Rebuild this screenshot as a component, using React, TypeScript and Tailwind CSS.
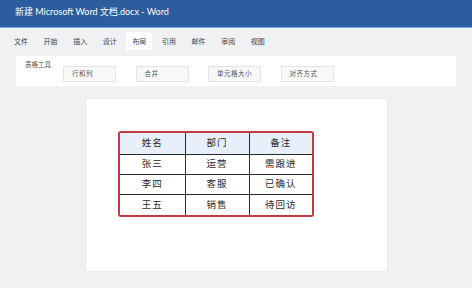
import React from 'react';

const tabs = ['文件', '开始', '插入', '设计', '布局', '引用', '邮件', '审阅', '视图'];
const tools = ['行和列', '合并', '单元格大小', '对齐方式'];
const rows = [
  ['张三', '运营', '需跟进'],
  ['李四', '客服', '已确认'],
  ['王五', '销售', '待回访'],
];

const font = { fontFamily: '"Noto Sans", "Noto Sans CJK SC", sans-serif' };

export default function App() {
  return (
    <div className="w-[472px] h-[288px] overflow-hidden bg-[#f0f1f3]" style={font}>
      {/* title bar */}
      <div className="h-[28px] bg-[#2c5d9e] border-b border-[#7fa3d6] flex items-center pl-[15px] pb-[4px]">
        <span className="text-white text-[9px] leading-none font-['Lato','Noto_Sans_CJK_SC',sans-serif]">
          新建 Microsoft Word 文档.docx - Word
        </span>
      </div>

      {/* tabs */}
      <div className="h-[28px] flex items-center pl-[8px] gap-[3.6px] pb-[2px]">
        {tabs.map((t) => (
          <div
            key={t}
            className={`w-[26px] h-[18px] flex items-center justify-center text-[7px] leading-none text-[#444] ${
              t === '布局' ? 'bg-white' : ''
            }`}
          >
            {t}
          </div>
        ))}
      </div>

      {/* ribbon */}
      <div className="mx-[16px] w-[440px] h-[30px] bg-white flex items-start">
        <div className="pl-[9px] pt-[6px] text-[6.5px] leading-none text-[#555] w-[47px]">表格工具</div>
        <div className="flex gap-[19.5px] pt-[10px]">
          {tools.map((t) => (
            <div
              key={t}
              className="w-[53px] h-[16px] border border-[#e2e4e8] bg-[#f8f8f9] flex items-center pl-[8px] text-[6.5px] leading-none text-[#555] tracking-[0.5px]"
            >
              {t}
            </div>
          ))}
        </div>
      </div>

      {/* document page */}
      <div className="ml-[85px] mt-[12px] w-[303px] h-[174px] bg-white border border-[#e9ebee] pl-[32px] pt-[32px]">
        <div className="w-[196px] border-2 border-[#bf3b3f] rounded-[3px] overflow-hidden">
          <table className="w-full table-fixed border-collapse text-[9.5px] text-[#2a2a2a] tracking-[1px]">
            <colgroup>
              <col className="w-[65px]" />
              <col className="w-[64px]" />
              <col className="w-[63px]" />
            </colgroup>
            <thead>
              <tr className="h-[21px] bg-[#e7effa]">
                {['姓名', '部门', '备注'].map((h, i) => (
                  <th
                    key={h}
                    className={`font-normal text-center border-b border-[#2a2a2a] ${i < 2 ? 'border-r' : ''}`}
                  >
                    {h}
                  </th>
                ))}
              </tr>
            </thead>
            <tbody>
              {rows.map((r, ri) => (
                <tr key={ri} className={ri === rows.length - 1 ? 'h-[21px]' : 'h-[20px]'}>
                  {r.map((c, ci) => (
                    <td
                      key={ci}
                      className={`text-center border-[#2a2a2a] ${ci < 2 ? 'border-r' : ''} ${
                        ri < rows.length - 1 ? 'border-b' : ''
                      }`}
                    >
                      {c}
                    </td>
                  ))}
                </tr>
              ))}
            </tbody>
          </table>
        </div>
      </div>
    </div>
  );
}
